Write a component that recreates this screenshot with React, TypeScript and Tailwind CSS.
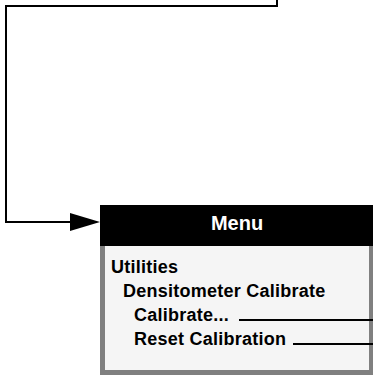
import React from 'react';

const font = { fontFamily: '"Liberation Sans", Arial, Helvetica, sans-serif' };

function Connector() {
  return (
    <svg className="absolute left-0 top-0" width={373} height={375} viewBox="0 0 373 375">
      <polyline points="277,0 277,6 6,6 6,222 71,222" fill="none" stroke="#000" strokeWidth={2} />
      <polygon points="70,213 100,222 70,231" fill="#000" />
    </svg>
  );
}

function Item({ label, indent, leader }: { label: string; indent: string; leader?: string }) {
  return (
    <div className={`flex items-start h-[24px] ${indent}`}>
      <span className="text-[18px] font-bold tracking-[0.25px] text-black leading-[24px] whitespace-nowrap">{label}</span>
      {leader && <div className={`h-[2px] bg-black flex-1 -mr-[5px] mt-[16px] ${leader}`} />}
    </div>
  );
}

export default function App() {
  return (
    <div className="relative w-[373px] h-[375px] bg-white overflow-hidden" style={font}>
      <Connector />
      <div className="ml-[100px] pt-[205px] w-[274px]">
        <div className="h-[41px] bg-black pt-[6px] text-center">
          <span className="text-white text-[20px] font-bold leading-[24px]">Menu</span>
        </div>
        <div className="h-[129px] bg-[#f5f5f5] border-[5px] border-t-0 border-[#808080] pt-[9px]">
          <Item label="Utilities" indent="pl-[6px]" />
          <Item label="Densitometer Calibrate" indent="pl-[18px]" />
          <Item label="Calibrate..." indent="pl-[29px]" leader="ml-[10px]" />
          <Item label="Reset Calibration" indent="pl-[29px]" leader="ml-[7px]" />
        </div>
      </div>
    </div>
  );
}
